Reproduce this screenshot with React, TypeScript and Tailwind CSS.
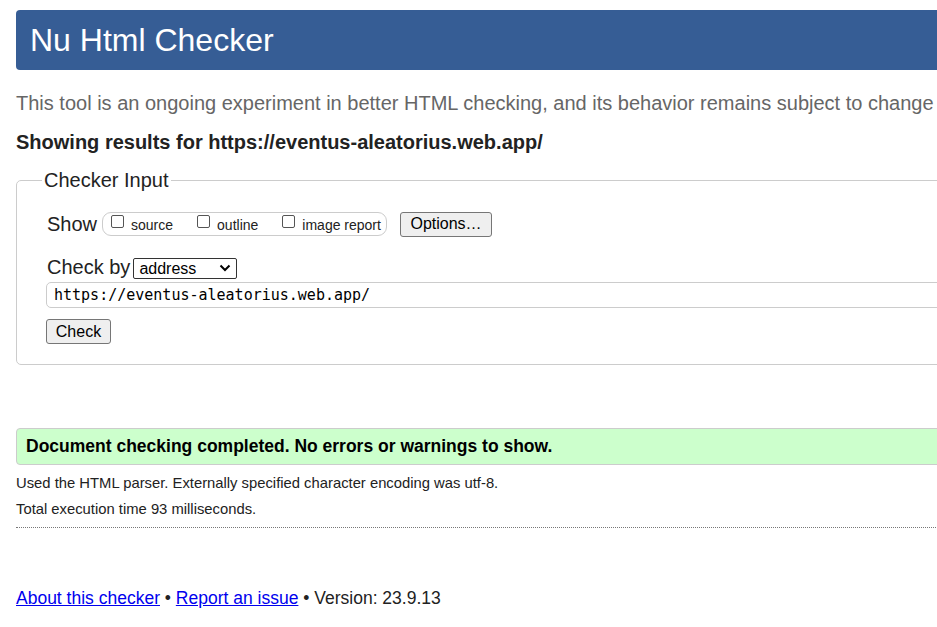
import React from "react";

export default function App() {
  const sans = { fontFamily: '"Liberation Sans", Arial, sans-serif' };
  return (
    <div
      className="w-[937px] h-[627px] overflow-hidden bg-white text-[#222]"
      style={sans}
    >
      <div className="w-[1000px] pl-[16px]">
        {/* Header */}
        <div className="mt-[10px] h-[60px] rounded-[4px] bg-[#365d95] pl-[14px] flex items-center">
          <h1 className="text-[32px] leading-none text-white font-normal">Nu Html Checker</h1>
        </div>

        <p className="mt-[21px] text-[20px] leading-[24px] text-[#666] whitespace-nowrap">
          This tool is an ongoing experiment in better HTML checking, and its behavior remains subject to change
        </p>

        <p className="mt-[15px] text-[20px] leading-[24px] font-bold text-[#222] whitespace-nowrap">
          Showing results for https://eventus-aleatorius.web.app/
        </p>

        {/* Fieldset */}
        <fieldset className="mt-[14px] border border-[#ccc] rounded-[5px] pl-[25px] pb-[20px]">
          <legend className="px-[2px] text-[20px] leading-[24px]">Checker Input</legend>
          <div className="pl-[4px]">
            <div className="mt-[19px] h-[26px] flex items-center">
              <span className="text-[20px] leading-[24px] ml-[1px]">Show</span>
              <div className="ml-[5px] h-[24px] w-[285px] border border-[#ccc] rounded-[9px] flex items-center pl-[8px] text-[14px]">
                <label className="flex items-center">
                  <input type="checkbox" className="appearance-none w-[13px] h-[13px] border border-[#555] rounded-[2px] bg-white -mt-[6px]" />
                  <span className="ml-[7px] leading-[16px] mt-[2px]">source</span>
                </label>
                <label className="flex items-center ml-[24px]">
                  <input type="checkbox" className="appearance-none w-[13px] h-[13px] border border-[#555] rounded-[2px] bg-white -mt-[6px]" />
                  <span className="ml-[7px] leading-[16px] mt-[2px]">outline</span>
                </label>
                <label className="flex items-center ml-[24px]">
                  <input type="checkbox" className="appearance-none w-[13px] h-[13px] border border-[#555] rounded-[2px] bg-white -mt-[6px]" />
                  <span className="ml-[7px] leading-[16px] mt-[2px]">image report</span>
                </label>
              </div>
              <button className="ml-[13px] w-[92px] h-[25px] bg-[#efefef] border border-[#767676] rounded-[3px] text-[16px] leading-none text-black">
                Options…
              </button>
            </div>

            <div className="mt-[18px] h-[24px] flex items-center">
              <span className="text-[20px] leading-[24px] ml-[1px]">Check by</span>
              <div className="relative ml-[3px] w-[104px] h-[21px]">
                <select
                  className="appearance-none w-full h-full border border-[#333] rounded-[2px] bg-white pl-[5px] text-[16px] leading-none text-black"
                  style={sans}
                  defaultValue="address"
                >
                  <option value="address">address</option>
                  <option value="file">file upload</option>
                  <option value="text">text input</option>
                </select>
                <svg
                  className="absolute right-[6px] top-[7px] pointer-events-none"
                  width="12"
                  height="8"
                  viewBox="0 0 12 8"
                >
                  <path d="M1.5 1.5 L6 6 L10.5 1.5" fill="none" stroke="#000" strokeWidth="2" />
                </svg>
              </div>
            </div>

            <input
              type="text"
              defaultValue="https://eventus-aleatorius.web.app/"
              className="mt-[3px] block w-[950px] h-[26px] border border-[#ccc] rounded-[5px] pl-[7px] text-[15px] text-black"
              style={{ fontFamily: '"DejaVu Sans Mono", "Liberation Mono", monospace' }}
            />

            <button className="mt-[11px] block w-[65px] h-[25px] bg-[#efefef] border border-[#767676] rounded-[3px] text-[16px] leading-none text-black">
              Check
            </button>
          </div>
        </fieldset>

        {/* Result */}
        <div className="mt-[63px] h-[37px] bg-[#ccffcc] border border-[#ccc] rounded-[4px] pl-[9px] flex items-center">
          <p className="text-[17.5px] font-bold text-black">
            Document checking completed. No errors or warnings to show.
          </p>
        </div>

        <p className="mt-[10px] text-[14.8px] leading-[17px]">
          Used the HTML parser. Externally specified character encoding was utf-8.
        </p>
        <p className="mt-[9px] text-[14.8px] leading-[17px]">Total execution time 93 milliseconds.</p>
        <div className="mt-[9px] border-t border-dotted border-[#777]" />

        <p className="mt-[59px] text-[17.5px] leading-[22px] text-[#222]">
          <a href="#" className="text-[#0000ee] underline">About this checker</a>
          {" • "}
          <a href="#" className="text-[#0000ee] underline">Report an issue</a>
          {" • Version: 23.9.13"}
        </p>
      </div>
    </div>
  );
}
